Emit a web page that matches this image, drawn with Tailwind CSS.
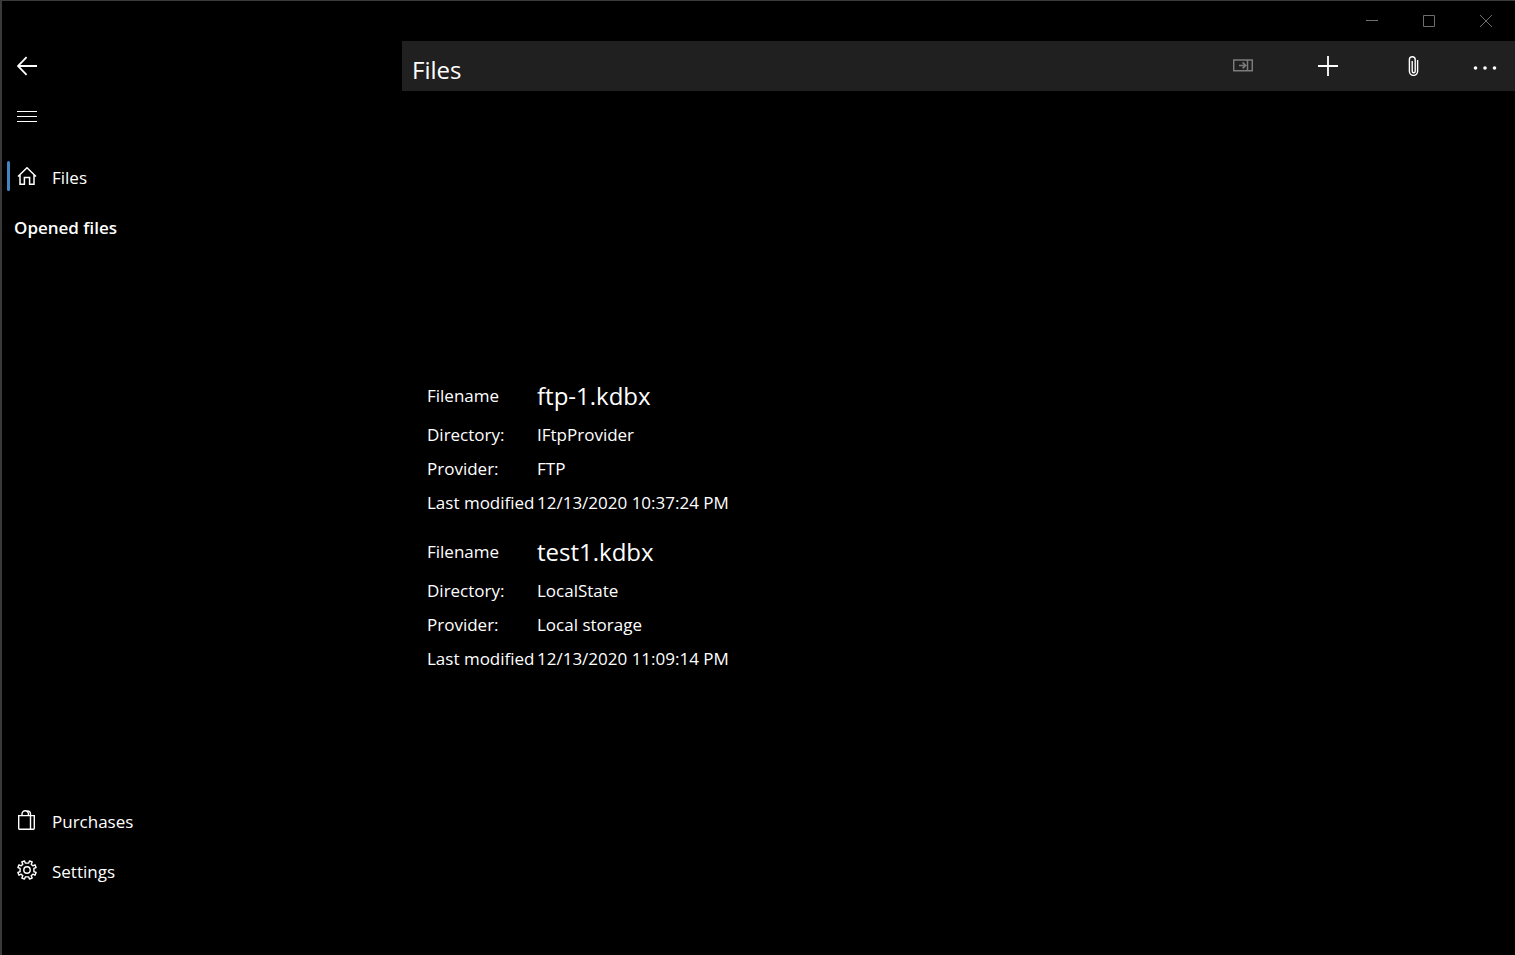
<!DOCTYPE html>
<html lang="en">
<head>
<meta charset="utf-8">
<meta name="viewport" content="width=device-width, initial-scale=1">
<title>Files</title>
<script src="https://cdn.jsdelivr.net/npm/@tailwindcss/browser@4"></script>
</head>
<body class="flex min-h-screen flex-col border-t border-l-2 border-t-[#3a3c3c] border-l-[#3a3a3a] bg-black font-['Segoe_UI','Open_Sans',sans-serif] text-[17px] leading-6 text-white">
  <header class="flex h-10 shrink-0 justify-end pr-px text-[#6e6e6e]">
    <button aria-label="Minimize" class="flex w-[57px] items-center justify-center"><svg class="size-3" viewBox="0 0 12 12" fill="none" stroke="currentColor"><path d="M0 5.500h12"/></svg></button>
    <button aria-label="Maximize" class="flex w-[57px] items-center justify-center"><svg class="size-3" viewBox="0 0 12 12" fill="none" stroke="currentColor"><path d="M.5.5h11v11H.5z"/></svg></button>
    <button aria-label="Close" class="flex w-[57px] items-center justify-center"><svg class="size-3" viewBox="0 0 12 12" fill="none" stroke="currentColor"><path d="M0 0l12 12M12 0L0 12"/></svg></button>
  </header>
  <div class="flex flex-1">
    <nav class="flex w-[400px] shrink-0 flex-col pb-[60px]">
      <button aria-label="Back" class="flex h-[50px] w-[50px] items-center justify-center"><svg class="size-5" viewBox="0 0 20 20" fill="none" stroke="currentColor" stroke-width="1.8"><path d="M20 10H1M9.600 1.200L.9 10l8.700 8.800"/></svg></button>
      <button aria-label="Menu" class="flex h-[50px] w-[50px] items-center justify-center"><svg class="size-5" viewBox="0 0 20 20" fill="none" stroke="currentColor"><path d="M0 5.500h20M0 10.500h20M0 15.500h20"/></svg></button>
      <a href="#files" class="mt-[10px] flex h-[50px] items-center pl-[5px]">
        <span class="h-[30px] w-[3px] rounded-full bg-[#4385be]"></span>
        <svg class="ml-[7px] size-5" viewBox="0 0 20 20" fill="none" stroke="currentColor" stroke-width="1.500"><path d="M1 10.500L10 1.700l9 8.800M3 8.800v9.500h4.400v-6.800h5.200v6.800H17V8.800"/></svg>
        <span class="ml-[15px] pt-[3px]">Files</span>
      </a>
      <h2 class="flex h-[50px] items-center pt-[3px] pl-3 font-semibold">Opened files</h2>
      <a href="#purchases" class="mt-auto flex h-[50px] items-center pl-[15px]">
        <svg class="size-5" viewBox="0 0 20 20" fill="none" stroke="currentColor" stroke-width="1.400"><path d="M1.700 5.600h15.600v12.700a1 1 0 0 1-1 1H2.700a1 1 0 0 1-1-1zM13.500 5.600v13.700M5 5.600V4a3.200 3.200 0 0 1 6.400 0v1.600M8.200.9h2a3.300 3.300 0 0 1 3.300 3.300v1.400"/></svg>
        <span class="ml-[15px] pt-[3px]">Purchases</span>
      </a>
      <a href="#settings" class="flex h-[50px] items-center pl-[15px]">
        <svg class="size-5" viewBox="0 0 20 20" fill="none" stroke="currentColor" stroke-width="1.400" stroke-linejoin="round"><circle cx="10" cy="10" r="3.200"/><path d="M8.300 3.100L7.500.9 4.800 2l1 2.200L4.200 5.800 2 4.800.9 7.500l2.200.8v3.400l-2.200.8L2 15.200l2.200-1 1.600 1.600-1 2.200 2.700 1.100.8-2.200h3.400l.8 2.200 2.700-1.100-1-2.200 1.600-1.600 2.200 1 1.100-2.700-2.200-.8V8.300l2.200-.8L18 4.800l-2.200 1-1.600-1.600 1-2.200L12.500.9l-.8 2.200z"/></svg>
        <span class="ml-[15px] pt-[3px]">Settings</span>
      </a>
    </nav>
    <main class="flex min-w-0 flex-1 flex-col">
      <div class="flex h-[50px] items-center bg-[#202020] pl-[10px]">
        <h1 class="mr-auto pt-2 text-2xl">Files</h1>
        <button disabled aria-label="Open pane" class="flex h-full w-[85px] items-center justify-center text-[#7c7c7c]"><svg class="size-5" viewBox="0 0 20 20" fill="none" stroke="currentColor" stroke-width="1.500"><path d="M.7 4h18.600v10.800H.7zM14.500 4v10.800M6 9.400h7M9.600 6.400l3 3-3 3"/></svg></button>
        <button aria-label="Add" class="flex h-full w-[85px] items-center justify-center"><svg class="size-5" viewBox="0 0 20 20" fill="none" stroke="currentColor" stroke-width="1.800"><path d="M0 10h20M10 0v20"/></svg></button>
        <button aria-label="Attach" class="flex h-full w-[85px] items-center justify-center"><svg class="size-5" viewBox="0 0 20 20" fill="none" stroke="currentColor" stroke-width="1.400"><path d="M14.600 4v11.300a4.100 4.100 0 0 1-8.200 0V3.600a2.900 2.900 0 0 1 5.800 0v11.600a1.500 1.500 0 0 1-3 0V5"/></svg></button>
        <button aria-label="More" class="flex h-full w-[60px] items-center justify-center pt-[3px]"><svg class="h-5 w-6" viewBox="0 0 24 20" fill="currentColor"><circle cx="2.500" cy="10" r="1.800"/><circle cx="12" cy="10" r="1.800"/><circle cx="21.500" cy="10" r="1.800"/></svg></button>
      </div>
      <ul class="my-auto flex flex-col gap-[10px] pt-1 pl-[25px]">
        <li>
          <dl class="grid grid-cols-[110px_1fr] grid-rows-[44px_34px_34px_34px] items-center whitespace-nowrap">
            <dt>Filename</dt><dd class="text-2xl">ftp-1.kdbx</dd>
            <dt>Directory:</dt><dd>IFtpProvider</dd>
            <dt>Provider:</dt><dd>FTP</dd>
            <dt>Last modified</dt><dd>12/13/2020 10:37:24 PM</dd>
          </dl>
        </li>
        <li>
          <dl class="grid grid-cols-[110px_1fr] grid-rows-[44px_34px_34px_34px] items-center whitespace-nowrap">
            <dt>Filename</dt><dd class="text-2xl">test1.kdbx</dd>
            <dt>Directory:</dt><dd>LocalState</dd>
            <dt>Provider:</dt><dd>Local storage</dd>
            <dt>Last modified</dt><dd>12/13/2020 11:09:14 PM</dd>
          </dl>
        </li>
      </ul>
    </main>
  </div>
</body>
</html>
